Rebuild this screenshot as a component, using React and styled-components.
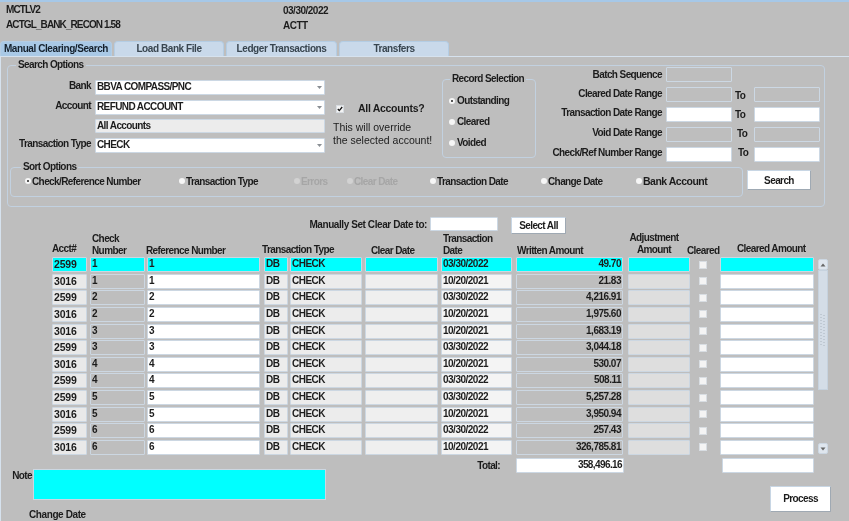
import React from 'react';
import styled, { createGlobalStyle } from 'styled-components';

const GlobalStyle = createGlobalStyle`
  * { box-sizing: border-box; }
  html, body { margin: 0; padding: 0; background: #bebebe; }
  body { font-family: "Liberation Sans", Arial, sans-serif; font-size: 10px; letter-spacing: -0.6px; font-weight: 700; color: #1c1c1c; }
`;

const Page = styled.div`
  width: 849px;
  height: 521px;
  overflow: hidden;
  background: #bebebe;
  border-top: 2px solid #a6c8e8;
  filter: blur(0.3px);
`;

const Header = styled.header`
  display: flex;
  height: 39px;
  padding: 2px 0 0 6px;
`;

const HeaderCol = styled.div`
  width: ${(p) => p.$w}px;
  display: flex;
  flex-direction: column;
  gap: 3px;
  line-height: 12px;
  letter-spacing: ${(p) => p.$spacing}px;
  padding-top: ${(p) => p.$top || 0}px;
`;

const Tabs = styled.nav`
  display: flex;
  gap: 2px;
  height: 15px;
`;

const Tab = styled.div`
  width: ${(p) => p.$w}px;
  text-align: center;
  line-height: 14px;
  letter-spacing: -0.42px;
  white-space: nowrap;
  border-radius: 4px 4px 0 0;
  background: ${(p) => (p.$active ? '#a9c9e6' : '#c9d9ea')};
  color: ${(p) => (p.$active ? '#14202c' : '#38454f')};
  border: 1px solid #b4cde4;
  border-bottom: 0;
`;

const Panel = styled.main`
  border-top: 1px solid #d6e2ee;
  border-left: 1px solid #d6e2ee;
  height: 465px;
  padding-left: 6px;
`;

const Group = styled.fieldset`
  margin: 0;
  padding: 0;
  min-width: 0;
  border: 1px solid #c2d1e0;
  border-radius: 4px;
`;

const Legend = styled.legend`
  margin-left: ${(p) => p.$left}px;
  padding: 0 2px;
  line-height: 12px;
  white-space: nowrap;
`;

const SearchGroup = styled(Group)`
  width: 818px;
  height: 148px;
  margin-top: 2px;
`;

const SearchTop = styled.div`
  display: flex;
  height: 90px;
`;

const MainForm = styled.div`
  display: grid;
  grid-template-columns: 75px 230px;
  grid-template-rows: 20px 19px 19px 15px;
  column-gap: 4px;
  margin-left: 8px;
  padding-top: 9px;
  flex: none;
  width: 317px;
`;

const Label = styled.label`
  text-align: right;
  line-height: 12px;
  white-space: nowrap;
`;

const Field = styled.div`
  position: relative;
  flex: none;
  height: ${(p) => p.$h || 15}px;
  width: ${(p) => (p.$w ? `${p.$w}px` : 'auto')};
  margin-left: ${(p) => p.$ml || 0}px;
  padding: 0 1px;
  line-height: ${(p) => (p.$h || 15) - 3}px;
  text-align: ${(p) => (p.$right ? 'right' : 'left')};
  background: ${(p) => p.$bg || '#fff'};
  border: 1px solid #ccd8e4;
  border-radius: 1px;
  white-space: nowrap;
  overflow: hidden;
`;

const Arrow = styled.svg`
  position: absolute;
  right: 1px;
  top: 4px;
`;

const Select = ({ children }) => (
  <Field>
    {children}
    <Arrow width="7" height="5" viewBox="0 0 7 5">
      <path d="M1 1h5L3.5 4z" fill="#8a8f94" />
    </Arrow>
  </Field>
);

const AccountsNote = styled.div`
  width: 109px;
  flex: none;
  padding-top: 31px;
  font-weight: 400;
  font-size: 10.5px;
  letter-spacing: 0;
  line-height: 13.5px;
`;

const AllAccounts = styled.div`
  display: flex;
  align-items: center;
  gap: 14px;
  margin: 0 0 5px 3px;
  font-weight: 700;
  font-size: 10.5px;
  letter-spacing: -0.3px;
  white-space: nowrap;
`;

const Box = styled.span`
  display: inline-flex;
  align-items: center;
  justify-content: center;
  width: 8px;
  height: 8px;
  background: #f4f4f4;
  border: 1px solid #d8dde2;
  flex: none;
`;

const RecordGroup = styled(Group)`
  width: 94px;
  height: 85px;
  flex: none;
  margin-top: 2px;
  padding: 5px 0 0 6px;
`;

const RecordOption = styled.div`
  display: flex;
  align-items: center;
  gap: 2px;
  height: 21px;
  white-space: nowrap;
`;

const Dot = styled.span`
  position: relative;
  width: 6px;
  height: 6px;
  border-radius: 50%;
  background: ${(p) => (p.$off ? '#d2d2d2' : '#f6f6f6')};
  flex: none;
  &::after {
    content: '';
    display: ${(p) => (p.$on ? 'block' : 'none')};
    position: absolute;
    left: 2px;
    top: 2px;
    width: 2px;
    height: 2px;
    background: #222;
    border-radius: 50%;
  }
`;

const RangeGrid = styled.div`
  display: grid;
  grid-template-columns: 130px 66px 22px 66px;
  grid-auto-rows: 15px;
  row-gap: 5px;
  margin-top: -4px;
`;

const RangeLabel = styled(Label)`
  padding-right: 4px;
  padding-top: ${(p) => p.$top || 0}px;
  grid-column: 1;
`;

const To = styled.span`
  padding-left: ${(p) => p.$left || 3}px;
  line-height: ${(p) => p.$lh}px;
`;

const SortRow = styled.div`
  display: flex;
  gap: 4px;
  margin-left: 2px;
  height: 36px;
`;

const SortGroup = styled(Group)`
  width: 733px;
  height: 36px;
  flex: none;
`;

const SortList = styled.div`
  display: flex;
  padding: 1px 0 0 14px;
`;

const SortItem = styled.div`
  display: flex;
  align-items: center;
  gap: 1px;
  width: ${(p) => p.$w}px;
  height: 14px;
  font-size: ${(p) => (p.$big ? 10.5 : 10)}px;
  letter-spacing: ${(p) => (p.$big ? -0.5 : -0.6)}px;
  color: ${(p) => (p.$off ? '#a6a6a6' : 'inherit')};
  white-space: nowrap;
  flex: none;
`;

const Button = styled.button`
  width: ${(p) => p.$w}px;
  height: ${(p) => p.$h}px;
  padding: 0;
  font: inherit;
  letter-spacing: inherit;
  color: inherit;
  background: #fff;
  border: 1px solid #c8d6e4;
  border-right-color: #9fa9b3;
  border-bottom-color: #9fa9b3;
  border-radius: 1px;
`;

const SearchButton = styled(Button)`
  margin-top: 9px;
  flex: none;
`;

const ClearBar = styled.div`
  display: flex;
  justify-content: flex-end;
  gap: 13px;
  width: 559px;
  height: 26px;
  margin-top: 10px;
`;

const ClearLabel = styled.div`
  display: flex;
  align-items: center;
  gap: 3px;
  height: 14px;
  letter-spacing: -0.42px;
  white-space: nowrap;
`;

const TableHead = styled.div`
  display: flex;
  height: 24px;
  margin: -10px 0 0 45px;
`;

const HeadCell = styled.div`
  width: ${(p) => p.$w}px;
  margin-right: ${(p) => p.$gap}px;
  padding-left: ${(p) => p.$left || 0}px;
  padding-bottom: ${(p) => p.$bottom || 0}px;
  display: flex;
  flex-direction: column;
  justify-content: flex-end;
  flex: none;
  line-height: 12px;
  white-space: nowrap;
  text-align: ${(p) => (p.$center ? 'center' : 'left')};
`;

const TableWrap = styled.div`
  display: flex;
  margin-left: 45px;
`;

const Rows = styled.div`
  display: flex;
  flex-direction: column;
  width: 766px;
`;

const Row = styled.div`
  display: flex;
  align-items: flex-start;
  height: 16.64px;
`;

const Cell = styled.div`
  width: ${(p) => p.$w}px;
  margin-right: ${(p) => p.$gap}px;
  height: 15px;
  padding: 0 1px;
  line-height: 12px;
  flex: none;
  text-align: ${(p) => (p.$right ? 'right' : 'left')};
  font-size: ${(p) => (p.$big ? 10.5 : 10)}px;
  letter-spacing: ${(p) => (p.$big ? -0.2 : -0.5)}px;
  background: ${(p) => p.$bg};
  border: 1px solid #ccd7e2;
  border-radius: 1px;
  overflow: hidden;
`;

const CheckCell = styled.div`
  width: 11px;
  margin-right: 12px;
  height: 15px;
  display: flex;
  align-items: center;
  justify-content: center;
  flex: none;
`;

const Scroll = styled.div`
  display: flex;
  flex-direction: column;
  width: 10px;
  height: 195px;
  margin-top: 2px;
`;

const ScrollButton = styled.div`
  display: flex;
  align-items: center;
  justify-content: center;
  height: 11px;
  flex: none;
  background: #dfe6ee;
  border: 1px solid #ccd7e2;
  border-radius: 2px;
`;

const Thumb = styled.div`
  display: flex;
  align-items: center;
  justify-content: center;
  height: 120px;
  background: #d4dde7;
  border: 1px solid #c6d2de;
`;

const Gap = styled.div`
  flex: 1;
`;

const Footer = styled.div`
  display: flex;
  margin-top: 1px;
`;

const NoteSide = styled.div`
  width: 319px;
  flex: none;
  padding: 11px 0 0 5px;
`;

const NoteRow = styled.div`
  display: flex;
  gap: 1px;
`;

const NoteLabel = styled(Label)`
  width: 20px;
  padding-top: 1px;
`;

const NoteBox = styled.div`
  width: 293px;
  height: 31px;
  background: #00ffff;
  border: 1px solid #ccd7e2;
`;

const ChangeDate = styled.div`
  margin: 9px 0 0 17px;
  line-height: 12px;
  letter-spacing: -0.4px;
`;

const TotalSide = styled.div`
  display: flex;
  flex-direction: column;
`;

const TotalRow = styled.div`
  display: flex;
  align-items: center;
`;

const TotalLabel = styled.div`
  width: 190px;
  padding-right: 16px;
  text-align: right;
`;

const ProcessButton = styled(Button)`
  margin: 13px 0 0 444px;
`;

const cyan = '#00ffff';
const columns = { acct: [35, 3], check: [55, 2], ref: [113, 4], db: [24, 2], type: [72, 3], clear: [73, 3], date: [71, 4], written: [107, 5], adj: [62, 7], amount: [94, 0] };

const rows = [
  ['2599', '1', '03/30/2022', '49.70'],
  ['3016', '1', '10/20/2021', '21.83'],
  ['2599', '2', '03/30/2022', '4,216.91'],
  ['3016', '2', '10/20/2021', '1,975.60'],
  ['3016', '3', '10/20/2021', '1,683.19'],
  ['2599', '3', '03/30/2022', '3,044.18'],
  ['3016', '4', '10/20/2021', '530.07'],
  ['2599', '4', '03/30/2022', '508.11'],
  ['2599', '5', '03/30/2022', '5,257.28'],
  ['3016', '5', '10/20/2021', '3,950.94'],
  ['2599', '6', '03/30/2022', '257.43'],
  ['3016', '6', '10/20/2021', '326,785.81'],
];

const TableCell = ({ col, bg, ...rest }) => <Cell $w={columns[col][0]} $gap={columns[col][1]} $bg={bg} {...rest} />;

export default function App() {
  return (
    <Page>
      <GlobalStyle />
      <Header>
        <HeaderCol $w={277} $spacing={-0.9}>
          <span>MCTLV2</span>
          <span>ACTGL_BANK_RECON 1.58</span>
        </HeaderCol>
        <HeaderCol $top={1} $spacing={-0.5}>
          <span>03/30/2022</span>
          <span>ACTT</span>
        </HeaderCol>
      </Header>
      <Tabs>
        <Tab $w={112} $active>Manual Clearing/Search</Tab>
        <Tab $w={110}>Load Bank File</Tab>
        <Tab $w={111}>Ledger Transactions</Tab>
        <Tab $w={110}>Transfers</Tab>
      </Tabs>
      <Panel>
        <SearchGroup>
          <Legend $left={8}>Search Options</Legend>
          <SearchTop>
            <MainForm>
              <Label>Bank</Label>
              <Select>BBVA COMPASS/PNC</Select>
              <Label>Account</Label>
              <Select>REFUND ACCOUNT</Select>
              <span />
              <Field $h={14} $bg="#ececec">All Accounts</Field>
              <Label>Transaction Type</Label>
              <Select>CHECK</Select>
            </MainForm>
            <AccountsNote>
              <AllAccounts>
                <Box>
                  <svg width="6" height="6" viewBox="0 0 6 6">
                    <path d="M.8 3l1.5 1.6L5.2 1" fill="none" stroke="#111" strokeWidth="1.3" />
                  </svg>
                </Box>
                All Accounts?
              </AllAccounts>
              This will override<br />the selected account!
            </AccountsNote>
            <RecordGroup>
              <Legend $left={1}>Record Selection</Legend>
              <RecordOption><Dot $on />Outstanding</RecordOption>
              <RecordOption><Dot />Cleared</RecordOption>
              <RecordOption><Dot />Voided</RecordOption>
            </RecordGroup>
            <RangeGrid>
              <RangeLabel $top={2}>Batch Sequence</RangeLabel>
              <Field $bg="transparent" />
              <span />
              <span />
              <RangeLabel $top={1}>Cleared Date Range</RangeLabel>
              <Field $bg="transparent" />
              <To $lh={18}>To</To>
              <Field $bg="transparent" />
              <RangeLabel>Transaction Date Range</RangeLabel>
              <Field />
              <To $lh={16}>To</To>
              <Field />
              <RangeLabel>Void Date Range</RangeLabel>
              <Field $bg="transparent" />
              <To $left={5} $lh={14}>To</To>
              <Field $bg="transparent" />
              <RangeLabel>Check/Ref Number Range</RangeLabel>
              <Field />
              <To $left={6} $lh={12}>To</To>
              <Field />
            </RangeGrid>
          </SearchTop>
          <SortRow>
            <SortGroup>
              <Legend $left={10}>Sort Options</Legend>
              <SortList>
                <SortItem $w={154}><Dot $on />Check/Reference Number</SortItem>
                <SortItem $w={115}><Dot />Transaction Type</SortItem>
                <SortItem $w={53} $off><Dot $off />Errors</SortItem>
                <SortItem $w={83} $off><Dot $off />Clear Date</SortItem>
                <SortItem $w={111}><Dot />Transaction Date</SortItem>
                <SortItem $w={95}><Dot />Change Date</SortItem>
                <SortItem $w={90} $big><Dot />Bank Account</SortItem>
              </SortList>
            </SortGroup>
            <SearchButton $w={64} $h={20}>Search</SearchButton>
          </SortRow>
        </SearchGroup>
        <ClearBar>
          <ClearLabel>
            Manually Set Clear Date to:
            <Field $w={68} $h={14} />
          </ClearLabel>
          <Button $w={55} $h={17}>Select All</Button>
        </ClearBar>
        <TableHead>
          <HeadCell $w={35} $gap={3} $bottom={2}>Acct#</HeadCell>
          <HeadCell $w={55} $gap={1} $left={2}><span>Check</span><span>Number</span></HeadCell>
          <HeadCell $w={114} $gap={2}>Reference Number</HeadCell>
          <HeadCell $w={100} $gap={3} $bottom={1}>Transaction Type</HeadCell>
          <HeadCell $w={73} $gap={3} $left={6}>Clear Date</HeadCell>
          <HeadCell $w={71} $gap={4} $left={2}><span>Transaction</span><span>Date</span></HeadCell>
          <HeadCell $w={107} $gap={5} $left={1}>Written Amount</HeadCell>
          <HeadCell $w={52} $gap={7} $bottom={1} $center><span>Adjustment</span><span>Amount</span></HeadCell>
          <HeadCell $w={33} $gap={0}>Cleared</HeadCell>
          <HeadCell $w={94} $gap={0} $left={17} $bottom={2}>Cleared Amount</HeadCell>
        </TableHead>
        <TableWrap>
          <Rows>
            {rows.map(([acct, num, date, amount], i) => {
              const on = i === 0;
              return (
                <Row key={i}>
                  <TableCell col="acct" bg={on ? cyan : '#e9e9e9'} $big>{acct}</TableCell>
                  <TableCell col="check" bg={on ? cyan : '#bebebe'}>{num}</TableCell>
                  <TableCell col="ref" bg={on ? cyan : '#fff'}>{num}</TableCell>
                  <TableCell col="db" bg={on ? cyan : '#ececec'}>DB</TableCell>
                  <TableCell col="type" bg={on ? cyan : '#ececec'}>CHECK</TableCell>
                  <TableCell col="clear" bg={on ? cyan : '#efefef'} />
                  <TableCell col="date" bg={on ? cyan : '#f4f4f4'}>{date}</TableCell>
                  <TableCell col="written" bg={on ? cyan : '#bebebe'} $right>{amount}</TableCell>
                  <TableCell col="adj" bg={on ? cyan : '#dedede'} />
                  <CheckCell><Box /></CheckCell>
                  <TableCell col="amount" bg={on ? cyan : '#fff'} />
                </Row>
              );
            })}
          </Rows>
          <Scroll>
            <ScrollButton>
              <svg width="6" height="4" viewBox="0 0 6 4"><path d="M0.5 3.5L3 .5l2.5 3z" fill="#666" /></svg>
            </ScrollButton>
            <Thumb>
              <svg width="6" height="34" viewBox="0 0 6 34">
                <path d="M1 1v32M4 2v31" stroke="#aab4be" strokeWidth="1" strokeDasharray="1 2" fill="none" />
              </svg>
            </Thumb>
            <Gap />
            <ScrollButton>
              <svg width="6" height="4" viewBox="0 0 6 4"><path d="M0.5 .5h5L3 3.5z" fill="#666" /></svg>
            </ScrollButton>
          </Scroll>
        </TableWrap>
        <Footer>
          <NoteSide>
            <NoteRow>
              <NoteLabel>Note</NoteLabel>
              <NoteBox />
            </NoteRow>
            <ChangeDate>Change Date</ChangeDate>
          </NoteSide>
          <TotalSide>
            <TotalRow>
              <TotalLabel>Total:</TotalLabel>
              <Field $w={108} $h={15} $right>358,496.16</Field>
              <Field $w={92} $h={15} $ml={98} />
            </TotalRow>
            <ProcessButton $w={61} $h={26}>Process</ProcessButton>
          </TotalSide>
        </Footer>
      </Panel>
    </Page>
  );
}
